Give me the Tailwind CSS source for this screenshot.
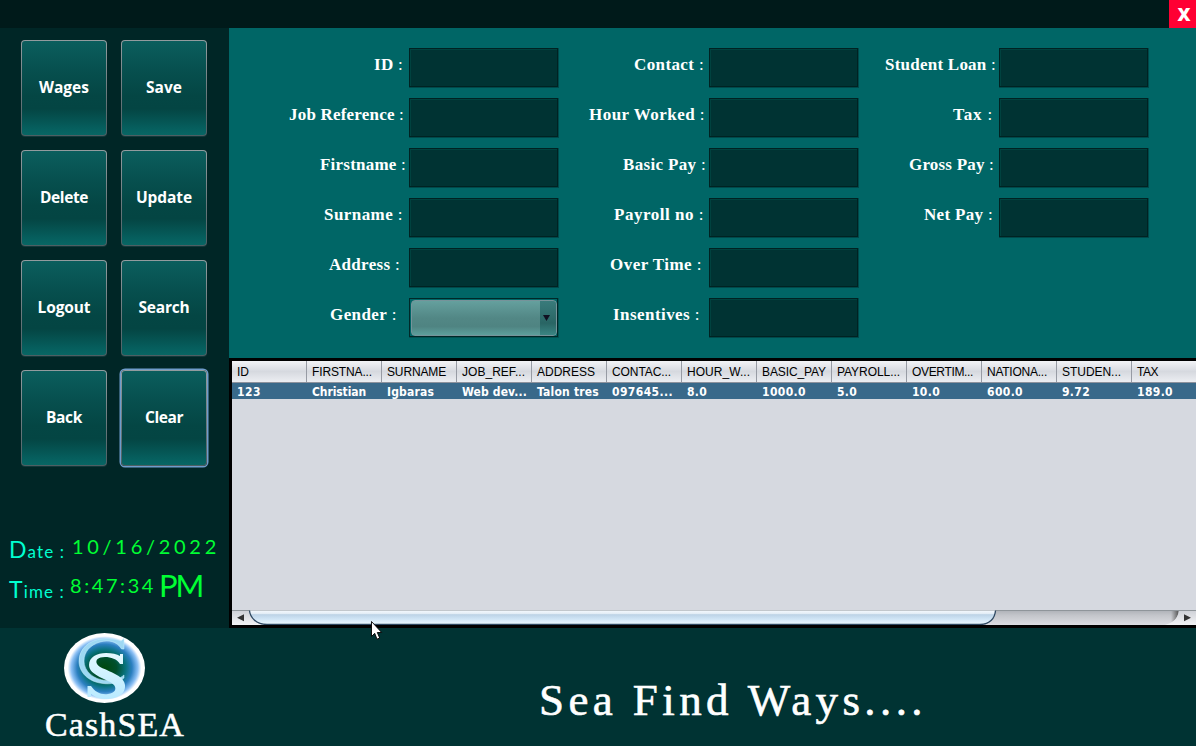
<!DOCTYPE html>
<html lang="en">
<head>
<meta charset="utf-8">
<title>CashSEA Payroll</title>
<script src="https://cdn.jsdelivr.net/npm/@tailwindcss/browser@4"></script>
</head>
<body class="w-[1196px] h-[746px] overflow-hidden bg-[#003333] text-white">
<div class="relative flex flex-col w-[1196px] h-[746px]">
  <header class="flex h-7 justify-end bg-[#001a1a]">
    <button class="w-[27px] h-7 pl-[3px] bg-[#ff0033] font-['Open_Sans'] font-extrabold text-[18px] leading-[28px] text-center">X</button>
  </header>

  <div class="flex h-[600px]">
    <aside class="w-[229px] h-full bg-[#002626] pt-3 pl-[21px]">
      <nav id="nav" class="grid grid-cols-[86px_86px] gap-x-[14px] gap-y-[14px]"></nav>
      <div class="flex h-[39px] mt-[60px] -ml-3 whitespace-nowrap text-[#00ffd0] font-['Lato'] leading-10">
        <span class="w-[63px] pt-[3px] text-[17px]"><span data-w="56" class="inline-block"><span class="text-[23px]">D</span>ate :</span></span>
        <span><span data-w="148" class="inline-block text-[20px] text-[#00ff33]">10/16/2022</span></span>
      </div>
      <div class="flex h-10 -ml-3 whitespace-nowrap text-[#00ffd0] font-['Lato'] leading-10">
        <span class="w-[61px] pt-1 text-[17px]"><span data-w="56" class="inline-block"><span class="text-[23px]">T</span>ime :</span></span>
        <span class="flex text-[#00ff33]"><span data-w="86" class="inline-block text-[20px]">8:47:34</span><span data-w="43" class="inline-block ml-[3px] text-[31px] leading-[41px]">PM</span></span>
      </div>
    </aside>

    <main class="w-[967px] h-full flex flex-col">
      <section id="form" class="flex h-[330px] pt-5 bg-[#006666]"></section>

      <section class="flex flex-col h-[270px] border-[3px] border-r-0 border-black bg-[#d6d9e0]">
        <div id="head" class="flex h-[22px] border-b border-[#8d929d] bg-linear-to-b from-[#f3f4f7] via-[#d6d9df] to-[#eceef2] overflow-hidden"></div>
        <div id="row" class="flex h-4 bg-[#39698a] overflow-hidden"></div>
        <div class="flex-1"></div>
        <div class="h-[15px]">
          <svg class="block" width="964" height="15" viewBox="0 0 964 15">
            <defs>
              <linearGradient id="track" x1="0" y1="0" x2="0" y2="1"><stop offset="0" stop-color="#adb0b6"/><stop offset=".35" stop-color="#c3c5ca"/><stop offset="1" stop-color="#dcdde2"/></linearGradient>
              <linearGradient id="thumb" x1="0" y1="0" x2="0" y2="1"><stop offset="0" stop-color="#f5f9fd"/><stop offset=".22" stop-color="#e3edf6"/><stop offset=".3" stop-color="#bdd3e6"/><stop offset=".6" stop-color="#cfe4f5"/><stop offset="1" stop-color="#ecfaff"/></linearGradient>
              <linearGradient id="cap" x1="0" y1="0" x2="0" y2="1"><stop offset="0" stop-color="#d0d2d8"/><stop offset="1" stop-color="#f2f3f5"/></linearGradient>
              <linearGradient id="end" x1="0" y1="0" x2="1" y2="0"><stop offset="0" stop-color="#666" stop-opacity="0"/><stop offset="1" stop-color="#555"/></linearGradient>
            </defs>
            <rect width="964" height="15" fill="url(#track)"/>
            <path d="M0 .5H964" stroke="#8f959a"/>
            <rect y="1" width="34" height="14" fill="url(#cap)"/>
            <path d="M939 1H946.500C946 7 943 11 939 13Z" fill="url(#end)"/>
            <path d="M947 1H964V15H933C941 13 946 8 947 1Z" fill="url(#cap)"/>
            <path d="M17.500 .5H763.500C763 8 758 14.500 748 14.500H35C24 14.500 18 7 17.500 .5Z" fill="url(#thumb)"/>
            <path d="M17.500 .5C18 7 24 14.500 35 14.500H748C758 14.500 763 8 763.500 .5" fill="none" stroke="#2d4760" stroke-width="1.300"/>
            <path d="M5 7.700L12 4.200V11.200Z M959 7.700L952 4.200V11.200Z" fill="#333"/>
          </svg>
        </div>
      </section>
    </main>
  </div>

  <footer class="flex h-[118px] bg-[#003333] font-['Liberation_Serif']">
    <div class="w-[229px] pt-[5px] pl-[45px]">
      <svg class="block ml-[19px]" width="81" height="70" viewBox="0 0 81 70">
        <defs>
          <radialGradient id="orb"><stop offset="0" stop-color="#00480d"/><stop offset=".3" stop-color="#004f2c"/><stop offset=".52" stop-color="#08727c"/><stop offset=".68" stop-color="#2b7fc0"/><stop offset=".82" stop-color="#8cc0f5"/><stop offset=".91" stop-color="#fff"/><stop offset="1" stop-color="#fff"/></radialGradient>
          <linearGradient id="ess" x1="0" y1="0" x2="0" y2="1"><stop offset="0" stop-color="#e4f9ff"/><stop offset="1" stop-color="#b9eaff"/></linearGradient>
        </defs>
        <ellipse cx="40.500" cy="35" rx="40.500" ry="35" fill="url(#orb)"/>
        <path d="M60 5.500V16H57.500C53 8 44 6.500 36 9C26 12 20 19 20 28C20 38 29 46.500 42 47.500C50 48 56 45.500 60 42V45C54 50 47 51.500 39 50.500C24 49 15 39 15 28C15 16 25 7 38 6C46 5 53 6.500 57 8Z" fill="#9ed8f3" stroke="#caf0ff" stroke-width=".5"/>
        <path d="M59 21V31H56C53 26 47 24 41 24C34 24 31 27 33 31C36 37 60 40 61 52C62 62 51 66 43 66C36 66 31 64 27 61V64H23.500V53H27C31 59 37 62 44 61C51 60 53 56 50 52C45 46 25 43 25 32C25 24 33 20 42 20C48 20 53 21 56 23V21Z" fill="url(#ess)"/>
      </svg>
      <div class="text-[34px] leading-[38px] whitespace-nowrap mt-[3px] [-webkit-text-stroke:0.5px_white]"><span data-w="140" class="inline-block">CashSEA</span></div>
    </div>
    <div class="pl-[310px] pt-[46px] text-[45px] leading-[52px] whitespace-nowrap [-webkit-text-stroke:0.6px_white]"><span data-w="388" class="inline-block">Sea Find Ways....</span></div>
  </footer>

  <svg class="absolute left-[371px] top-[621px]" width="12" height="20" viewBox="0 0 12 20"><path d="M.5 .5V15.500L3.700 12.300L6 18.200L8.700 17L6.300 11.500H10.700Z" fill="#fff" stroke="#000" stroke-width=".9"/></svg>
</div>
<script>
  document.getElementById('nav').innerHTML = [['Wages',50],['Save',36],['Delete',48],['Update',56],['Logout',53],['Search',51],['Back',36],['Clear',38]].map(([t, w]) =>
    `<button class="h-24 rounded-[4px] p-px bg-linear-to-b from-[#939c9f] to-[#4d5f63] ${t === 'Clear' ? 'ring-[1.5px] ring-[#6f9ccb]' : 'shadow-[0_1px_0_#12393b]'}"><span class="flex items-center justify-center h-full rounded-[3px] pb-px bg-[linear-gradient(#0b5e5d,#07504f_30%,#044644_58%,#044543_72%,#06605f_94%,#086664)] font-['Open_Sans'] font-bold text-[15.5px]"><span data-w="${w}">${t}</span></span></button>`).join('');

  // Each column: label width class, then [text, text width, space after the text]
  const columns = [
    ['w-[180px]', [['ID',29,6],['Job Reference',115,5],['Firstname',86,3],['Surname',79,6],['Address',71,9],['Gender',67,12]]],
    ['w-[150px]', [['Contact',70,5],['Hour Worked',116,4],['Basic Pay',83,3],['Payroll no',90,5],['Over Time',92,7],['Insentives',87,9]]],
    ['w-[140px]', [['Student Loan',111,3],['Tax',40,6],['Gross Pay',85,5],['Net Pay',69,6]]]
  ];
  const field = `<div class="w-[150px] h-10 border border-[#00494a] border-t-0 border-l-0"><div class="h-full border border-[#002222] bg-[#003333] shadow-[inset_1px_1px_0_#00423f]"></div></div>`;
  const combo = `<div class="w-[150px] h-10 border border-[#005252] border-t-0 border-l-0"><div class="h-full border border-[#002828] p-px pr-0 pb-0"><div class="flex h-full rounded-[4px] overflow-hidden border border-[#76939a] bg-[linear-gradient(#65a09e,#528785_50%,#4f8482_75%,#5d9f9c)]"><div class="flex-1"></div><div class="w-4 pr-[3px] flex items-center justify-center bg-[linear-gradient(#397b7b,#296564_65%,#3a8583)]"><svg width="7" height="6"><path d="M0 0H7L3.500 6Z" fill="#112"/></svg></div></div></div></div>`;
  document.getElementById('form').innerHTML = columns.map(([w, rows]) =>
    `<div class="flex flex-col gap-[10px]">${rows.map(([t, tw, pad]) =>
      `<div class="flex"><div class="${w} h-10 flex justify-end font-['Liberation_Serif'] text-[17px] leading-[33px] whitespace-nowrap" style="padding-right:${pad}px"><span data-w="${tw}"><b>${t}</b> :</span></div>${t === 'Gender' ? combo : field}</div>`).join('')}</div>`).join('');

  const cells = [['ID','123'],['FIRSTNA...','Christian'],['SURNAME','Igbaras'],['JOB_REF...','Web dev...'],['ADDRESS','Talon tres'],['CONTAC...','097645...'],['HOUR_W...','8.0'],['BASIC_PAY','1000.0'],['PAYROLL...','5.0'],['OVERTIM...','10.0'],['NATIONA...','600.0'],['STUDEN...','9.72'],['TAX','189.0']];
  const hw = [12,60,59,63,58,59,63,64,63,61,60,59,21], cw = [24,54,47,65,62,61,20,44,20,28,36,28,36];
  document.getElementById('head').innerHTML = cells.map((c, i) =>
    `<div class="w-[75px] shrink-0 pl-[5px] border-r border-[#979ba4] font-['Liberation_Sans'] text-[12px] leading-[22px] text-black whitespace-nowrap"><span data-w="${hw[i]}">${c[0]}</span></div>`).join('');
  document.getElementById('row').innerHTML = cells.map((c, i) =>
    `<div class="w-[75px] shrink-0 pl-[5px] font-['DejaVu_Sans_Condensed','DejaVu_Sans'] font-bold text-[12px] leading-[18px] whitespace-nowrap"><span data-w="${cw[i]}">${c[1]}</span></div>`).join('');

  // Space the letters of each label out to its set width
  function fit() {
    document.querySelectorAll('[data-w]').forEach(e => {
      e.style.letterSpacing = '0px';
      e.style.letterSpacing = (e.dataset.w - e.getBoundingClientRect().width) / e.textContent.length + 'px';
    });
  }
  addEventListener('load', () => { fit(); requestAnimationFrame(fit); document.fonts.ready.then(fit); setTimeout(fit, 50); });
</script>
</body>
</html>
